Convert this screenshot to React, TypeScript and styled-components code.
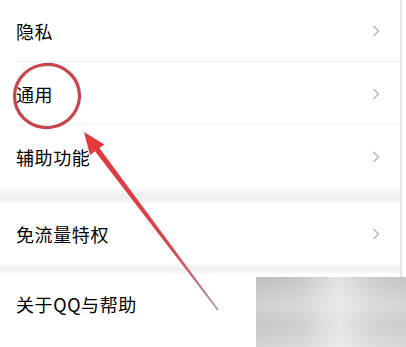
import styled, { createGlobalStyle } from "styled-components";

const GlobalStyle = createGlobalStyle`
  html, body {
    margin: 0;
    padding: 0;
    background: #fff;
  }
  body {
    font-family: "Noto Sans CJK SC", "Noto Sans", sans-serif;
  }
`;

type Item = { label: string; divider?: boolean };

const groups: Item[][] = [
  [{ label: "隐私", divider: true }, { label: "通用", divider: true }, { label: "辅助功能" }],
  [{ label: "免流量特权" }],
  [{ label: "关于QQ与帮助" }],
];

const rowHeights = [62, 63, 64];

export default function App() {
  return (
    <>
      <GlobalStyle />
      <Screen>
        <List>
          {groups.map((group, gi) => (
            <Group key={gi}>
              {group.map((item, i) => (
                <Row key={item.label} $divider={!!item.divider} $h={gi === 0 ? rowHeights[i] : 61}>
                  <Label>{item.label}</Label>
                  {gi < 2 && (
                    <Chevron viewBox="0 0 8 12">
                      <path d="M1.5 1 L6.5 6 L1.5 11" fill="none" stroke="#b4b4b4" strokeWidth="1.4" />
                    </Chevron>
                  )}
                </Row>
              ))}
              {gi < groups.length - 1 && <Gap $h={gi === 0 ? 14 : 9} />}
            </Group>
          ))}
        </List>
        <ScrollEdge />
        <Watermark />
        <Annotation viewBox="0 0 406 347">
          <defs>
            <linearGradient id="arrowFade" x1="84" y1="133" x2="218" y2="310" gradientUnits="userSpaceOnUse">
              <stop offset="0" stopColor="#e3383e" />
              <stop offset="0.65" stopColor="#d9444b" />
              <stop offset="1" stopColor="#a8989e" />
            </linearGradient>
          </defs>
          <ellipse cx="47" cy="96" rx="32.5" ry="31.5" fill="none" stroke="#c9454d" strokeWidth="3.2" transform="rotate(-10 47 96)" />
          <path
            d="M84 132 L104.5 144.5 L99.4 148.1 L218.6 309.6 L217.4 310.4 L95 151.2 L90 155.3 Z"
            fill="url(#arrowFade)"
          />
        </Annotation>
      </Screen>
    </>
  );
}

const Screen = styled.div`
  position: relative;
  width: 406px;
  height: 347px;
  overflow: hidden;
  background: #fff;
`;

const List = styled.div`
  display: flex;
  flex-direction: column;
  width: 400px;
`;

const Group = styled.div`
  display: flex;
  flex-direction: column;
`;

const Row = styled.div<{ $divider: boolean; $h: number }>`
  height: ${(p) => p.$h}px;
  display: flex;
  align-items: center;
  justify-content: space-between;
  padding: 0 20px 0 16px;
  position: relative;
  background: #fff;
  &::after {
    content: "";
    display: ${(p) => (p.$divider ? "block" : "none")};
    position: absolute;
    left: 16px;
    right: 0;
    bottom: 0;
    height: 1px;
    background: #f1f1f1;
  }
`;

const Label = styled.span`
  font-size: 18px;
  color: #000;
  letter-spacing: 0.6px;
`;

const Chevron = styled.svg`
  width: 8px;
  height: 12px;
`;

const Gap = styled.div<{ $h: number }>`
  height: ${(p) => p.$h}px;
  background: linear-gradient(#fafafa, #efefef 50%, #f6f6f6);
`;

const ScrollEdge = styled.div`
  position: absolute;
  top: 0;
  right: 4px;
  width: 2px;
  height: 100%;
  background: #e6e6e6;
`;

const Watermark = styled.div`
  position: absolute;
  left: 256px;
  top: 277px;
  width: 150px;
  height: 70px;
  background:
    linear-gradient(90deg, rgba(255,255,255,0) 0%, rgba(255,255,255,0.15) 30%, rgba(255,255,255,0.55) 55%, rgba(255,255,255,0.2) 80%, rgba(255,255,255,0.1) 100%),
    linear-gradient(180deg, #bdbdbd 0%, #d2d2d2 40%, #c6c6c6 70%, #d4d4d4 100%);
`;

const Annotation = styled.svg`
  position: absolute;
  left: 0;
  top: 0;
  width: 406px;
  height: 347px;
  pointer-events: none;
`;
